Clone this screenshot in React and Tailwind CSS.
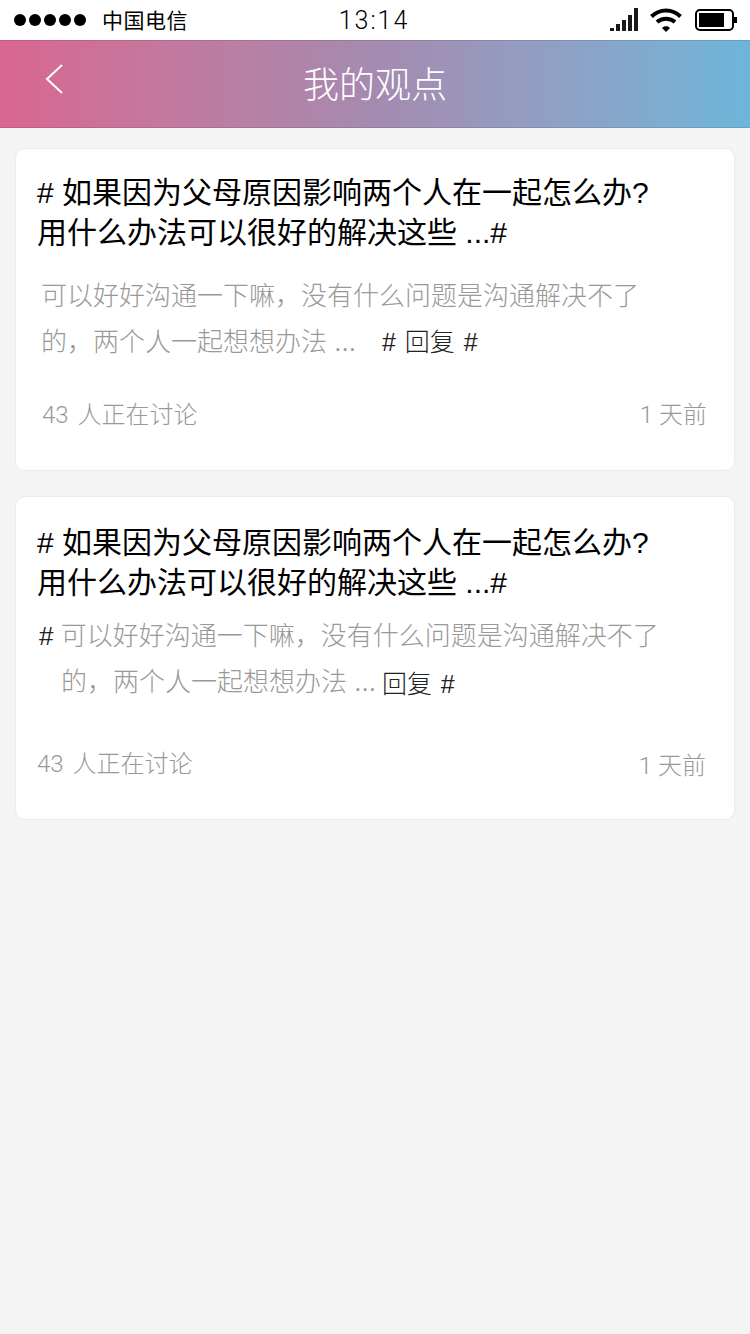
const cjk = "font-['Liberation_Sans','Noto_Sans_CJK_SC',sans-serif]";

const StatusBar = () => (
  <div className="flex h-10 items-center bg-white text-black">
    <div className="flex w-[314px] items-center pl-[14px]">
      <div className="flex gap-[3px]">
        {[0, 1, 2, 3, 4].map((i) => (
          <span key={i} className="size-3 rounded-full bg-black" />
        ))}
      </div>
      <span className="ml-[16px] text-[21px] leading-none tracking-[0.5px]">中国电信</span>
    </div>
    <span className="w-[120px] text-center font-['Roboto','Noto_Sans_CJK_SC',sans-serif] text-[25px] font-light leading-none tracking-[2px]">13:14</span>
    <div className="ml-auto flex items-center pr-[13px]">
      <svg width="28" height="24" viewBox="0 0 28 24" fill="#1a1a1a">
        <rect x="0" y="20" width="4" height="3" />
        <rect x="6" y="16" width="4" height="7" />
        <rect x="12" y="12" width="4" height="11" />
        <rect x="18" y="7" width="4" height="16" />
        <rect x="24" y="0" width="4" height="23" />
      </svg>
      <svg className="ml-[12px]" width="32" height="24" viewBox="0 0 32 24" fill="none" stroke="#000" strokeWidth="4">
        <path d="M1.5 8.5 C10 0.5 22 0.5 30.5 8.5" />
        <path d="M7 14 C12 9.5 20 9.5 25 14" />
        <path d="M12 21 L16 25 L20 21 C18 18.6 14 18.6 12 21Z" fill="#000" stroke="none" transform="translate(0 -1)" />
      </svg>
      <svg className="ml-[13px]" width="42" height="24" viewBox="0 0 42 24">
        <rect x="1" y="2" width="37" height="20" rx="4" fill="none" stroke="#000" strokeWidth="2" />
        <rect x="4" y="5" width="25" height="14" fill="#000" />
        <rect x="39" y="9" width="3" height="6" fill="#000" />
      </svg>
    </div>
  </div>
);

const Card = ({ titleClass, children, footerClass, timeClass }) => (
  <div className="rounded-[10px] border border-[#ebebeb] bg-white">
    <h2 className={`pl-[21px] text-[30px] leading-[40px] text-black ${titleClass}`}>
      # 如果因为父母原因影响两个人在一起怎么办?
      <br />
      用什么办法可以很好的解决这些 ...#
    </h2>
    {children}
    <div className={`flex justify-between font-['Roboto','Noto_Sans_CJK_SC',sans-serif] text-[24px] font-light leading-[30px] text-[#999999] ${footerClass}`}>
      <span className="[word-spacing:3px]">43 人正在讨论</span>
      <span className={timeClass}>1 天前</span>
    </div>
  </div>
);

export default function App() {
  return (
    <div className={`min-h-[1334px] bg-[#f4f4f4] ${cjk}`}>
      <StatusBar />
      <header className="relative flex h-[88px] items-center justify-center border-y border-black/10 bg-gradient-to-r from-[#d96690] via-[#a58ab0] to-[#6cb6da]">
        <svg className="absolute left-[44px] top-[22px]" width="20" height="32" viewBox="0 0 20 32" fill="none" stroke="#fff" strokeWidth="2">
          <path d="M18 2 L3 16 L18 30" />
        </svg>
        <h1 className="pt-1 text-[36px] font-light leading-none text-white">我的观点</h1>
      </header>

      <main className="flex flex-col gap-[25px] px-[15px] pt-[20px]">
        <Card titleClass="pt-[24px]" footerClass="mt-[35px] pb-[40px] pl-[26px] pr-[27px]">
          <div className="mt-[20px] pl-[25px] text-[26px] font-light leading-[46px] text-[#999999]">
            <div>可以好好沟通一下嘛，没有什么问题是沟通解决不了</div>
            <div>
              的，两个人一起想想办法 ...
              <span className="ml-[26px] text-[25px] text-[#222] [word-spacing:2px]"># 回复 #</span>
            </div>
          </div>
        </Card>
        <Card titleClass="pt-[26px]" footerClass="mt-[44px] pb-[38px] pl-[21px] pr-[28px]" timeClass="mt-[2px]">
          <div className="mt-[10px] pl-[23px] text-[26px] font-light leading-[46px] text-[#999999]">
            <div>
              <span className="text-[#222]">#</span> 可以好好沟通一下嘛，没有什么问题是沟通解决不了
            </div>
            <div className="pl-[22px]">
              的，两个人一起想想办法 ...
              <span className="relative top-[2px] ml-[6px] text-[25px] text-[#222] [word-spacing:2px]">回复 #</span>
            </div>
          </div>
        </Card>
      </main>
    </div>
  );
}
